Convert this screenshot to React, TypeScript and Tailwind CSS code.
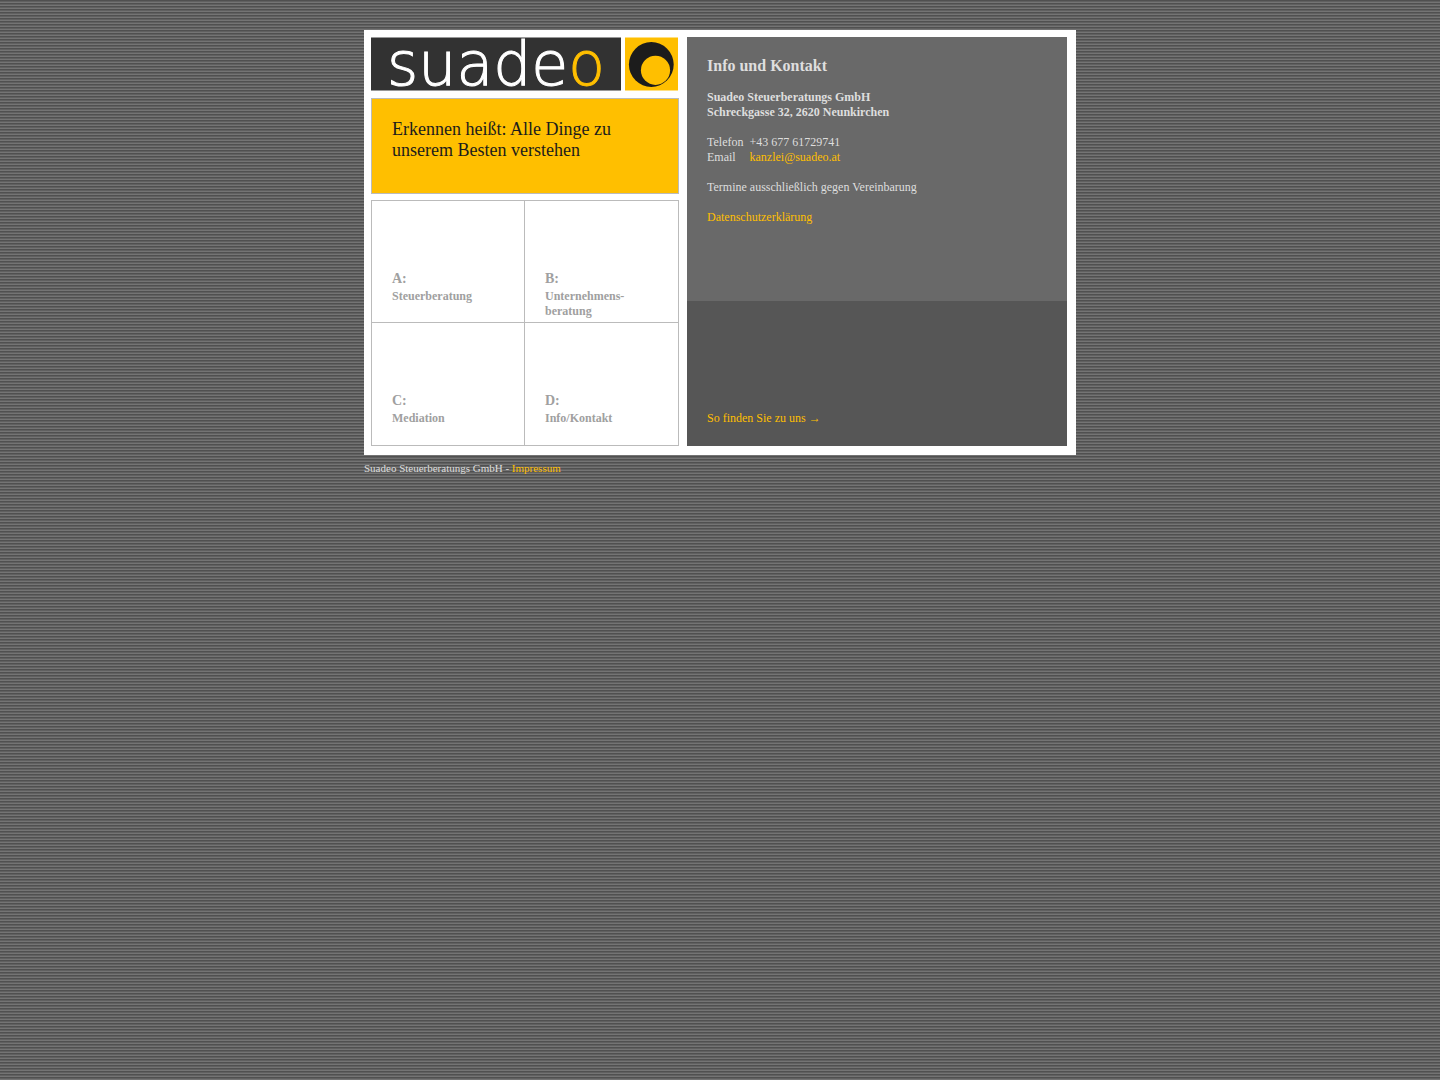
import clsx from "clsx";

type Topic = { letter: string; lines: string[]; href: string };

const topics: Topic[] = [
    { letter: "A:", lines: ["Steuerberatung"], href: "#steuerberatung" },
    { letter: "B:", lines: ["Unternehmens-", "beratung"], href: "#unternehmensberatung" },
    { letter: "C:", lines: ["Mediation"], href: "#mediation" },
    { letter: "D:", lines: ["Info/Kontakt"], href: "#kontakt" },
];

const Logo = () => (
    <a href="#start" aria-label="Suadeo Startseite" className="block">
        <svg viewBox="0 0 308 54" className="block w-full overflow-visible">
            <rect x="0" y="0.5" width="250" height="53" fill="#323232" />
            <text
                x="125"
                y="48"
                textAnchor="middle"
                fontSize="60"
                strokeWidth="1"
                className="fill-white stroke-white font-['DejaVu_Sans',sans-serif] font-extralight"
            >
                suade<tspan className="fill-[#ffbf00] stroke-[#ffbf00]">o</tspan>
            </text>
            <rect x="254" y="0.5" width="53" height="53" fill="#ffbf00" />
            <circle cx="280.3" cy="27.5" r="22.4" fill="#1c1c1c" />
            <circle cx="284.5" cy="33.3" r="14.6" fill="#ffbf00" />
        </svg>
    </a>
);

const TopicLink = ({ topic, className }: { topic: Topic; className?: string }) => (
    <a href={topic.href} className={clsx("block pt-[69px] pl-5 font-bold text-[#a0a0a0]", className)}>
        <span className="block pb-0.5 text-sm leading-[17px]">{topic.letter}</span>
        {topic.lines.map((line) => (
            <span key={line} className="block">{line}</span>
        ))}
    </a>
);

const ContactPanel = () => (
    <section className="flex flex-col bg-[#565656] text-[#dedede]">
        <div className="h-[264px] bg-[#696969] px-5 pt-[19px]">
            <h1 className="mb-3.5 text-base leading-5 font-bold">Info und Kontakt</h1>
            <p className="mb-[15px] font-bold">
                Suadeo Steuerberatungs GmbH<br />
                Schreckgasse 32, 2620 Neunkirchen
            </p>
            <dl className="mb-[15px] grid grid-cols-[max-content_1fr] gap-x-1.5">
                <dt>Telefon</dt>
                <dd>+43 677 61729741</dd>
                <dt>Email</dt>
                <dd><a href="mailto:kanzlei@suadeo.at" className="text-[#ffbf00]">kanzlei@suadeo.at</a></dd>
            </dl>
            <p className="mb-[15px]">Termine ausschließlich gegen Vereinbarung</p>
            <p><a href="#datenschutz" className="text-[#ffbf00]">Datenschutzerklärung</a></p>
        </div>
        <p className="mt-auto px-5 pb-5">
            <a href="#anfahrt" className="text-[#ffbf00]">
                So finden Sie zu uns <span className="font-['Liberation_Sans',sans-serif]">→</span>
            </a>
        </p>
    </section>
);

export default function App() {
    return (
        <div className="min-h-screen bg-[repeating-linear-gradient(to_bottom,#505050_0px,#505050_1px,#606060_1px,#606060_2px,#747474_2px,#747474_3px)] pt-[30px] font-['Liberation_Serif',serif] text-xs leading-[15px]">
            <div className="mx-auto max-w-[712px]">
                <main className="grid grid-cols-[308fr_380fr] gap-2 bg-white pt-[7px] pr-[9px] pb-[9px] pl-[7px]">
                    <div>
                        <Logo />
                        <div className="mt-[7px] h-24 border border-[#bbbbbb] bg-[#ffbf00] px-5 pt-5">
                            <p className="text-lg leading-[21px] text-[#1c1c1c]">
                                Erkennen heißt: Alle Dinge zu<br />
                                unserem Besten verstehen
                            </p>
                        </div>
                        <nav className="mt-1.5 grid h-[246px] grid-cols-2 grid-rows-2 border border-[#bbbbbb]">
                            {topics.map((topic, i) => (
                                <TopicLink
                                    key={topic.letter}
                                    topic={topic}
                                    className={clsx(i % 2 === 0 && "border-r border-[#bbbbbb]", i < 2 && "border-b border-[#bbbbbb]")}
                                />
                            ))}
                        </nav>
                    </div>
                    <ContactPanel />
                </main>
                <footer className="pt-1.5 text-[11px] text-[#dedede]">
                    Suadeo Steuerberatungs GmbH - <a href="#impressum" className="text-[#ffbf00]">Impressum</a>
                </footer>
            </div>
        </div>
    );
}
